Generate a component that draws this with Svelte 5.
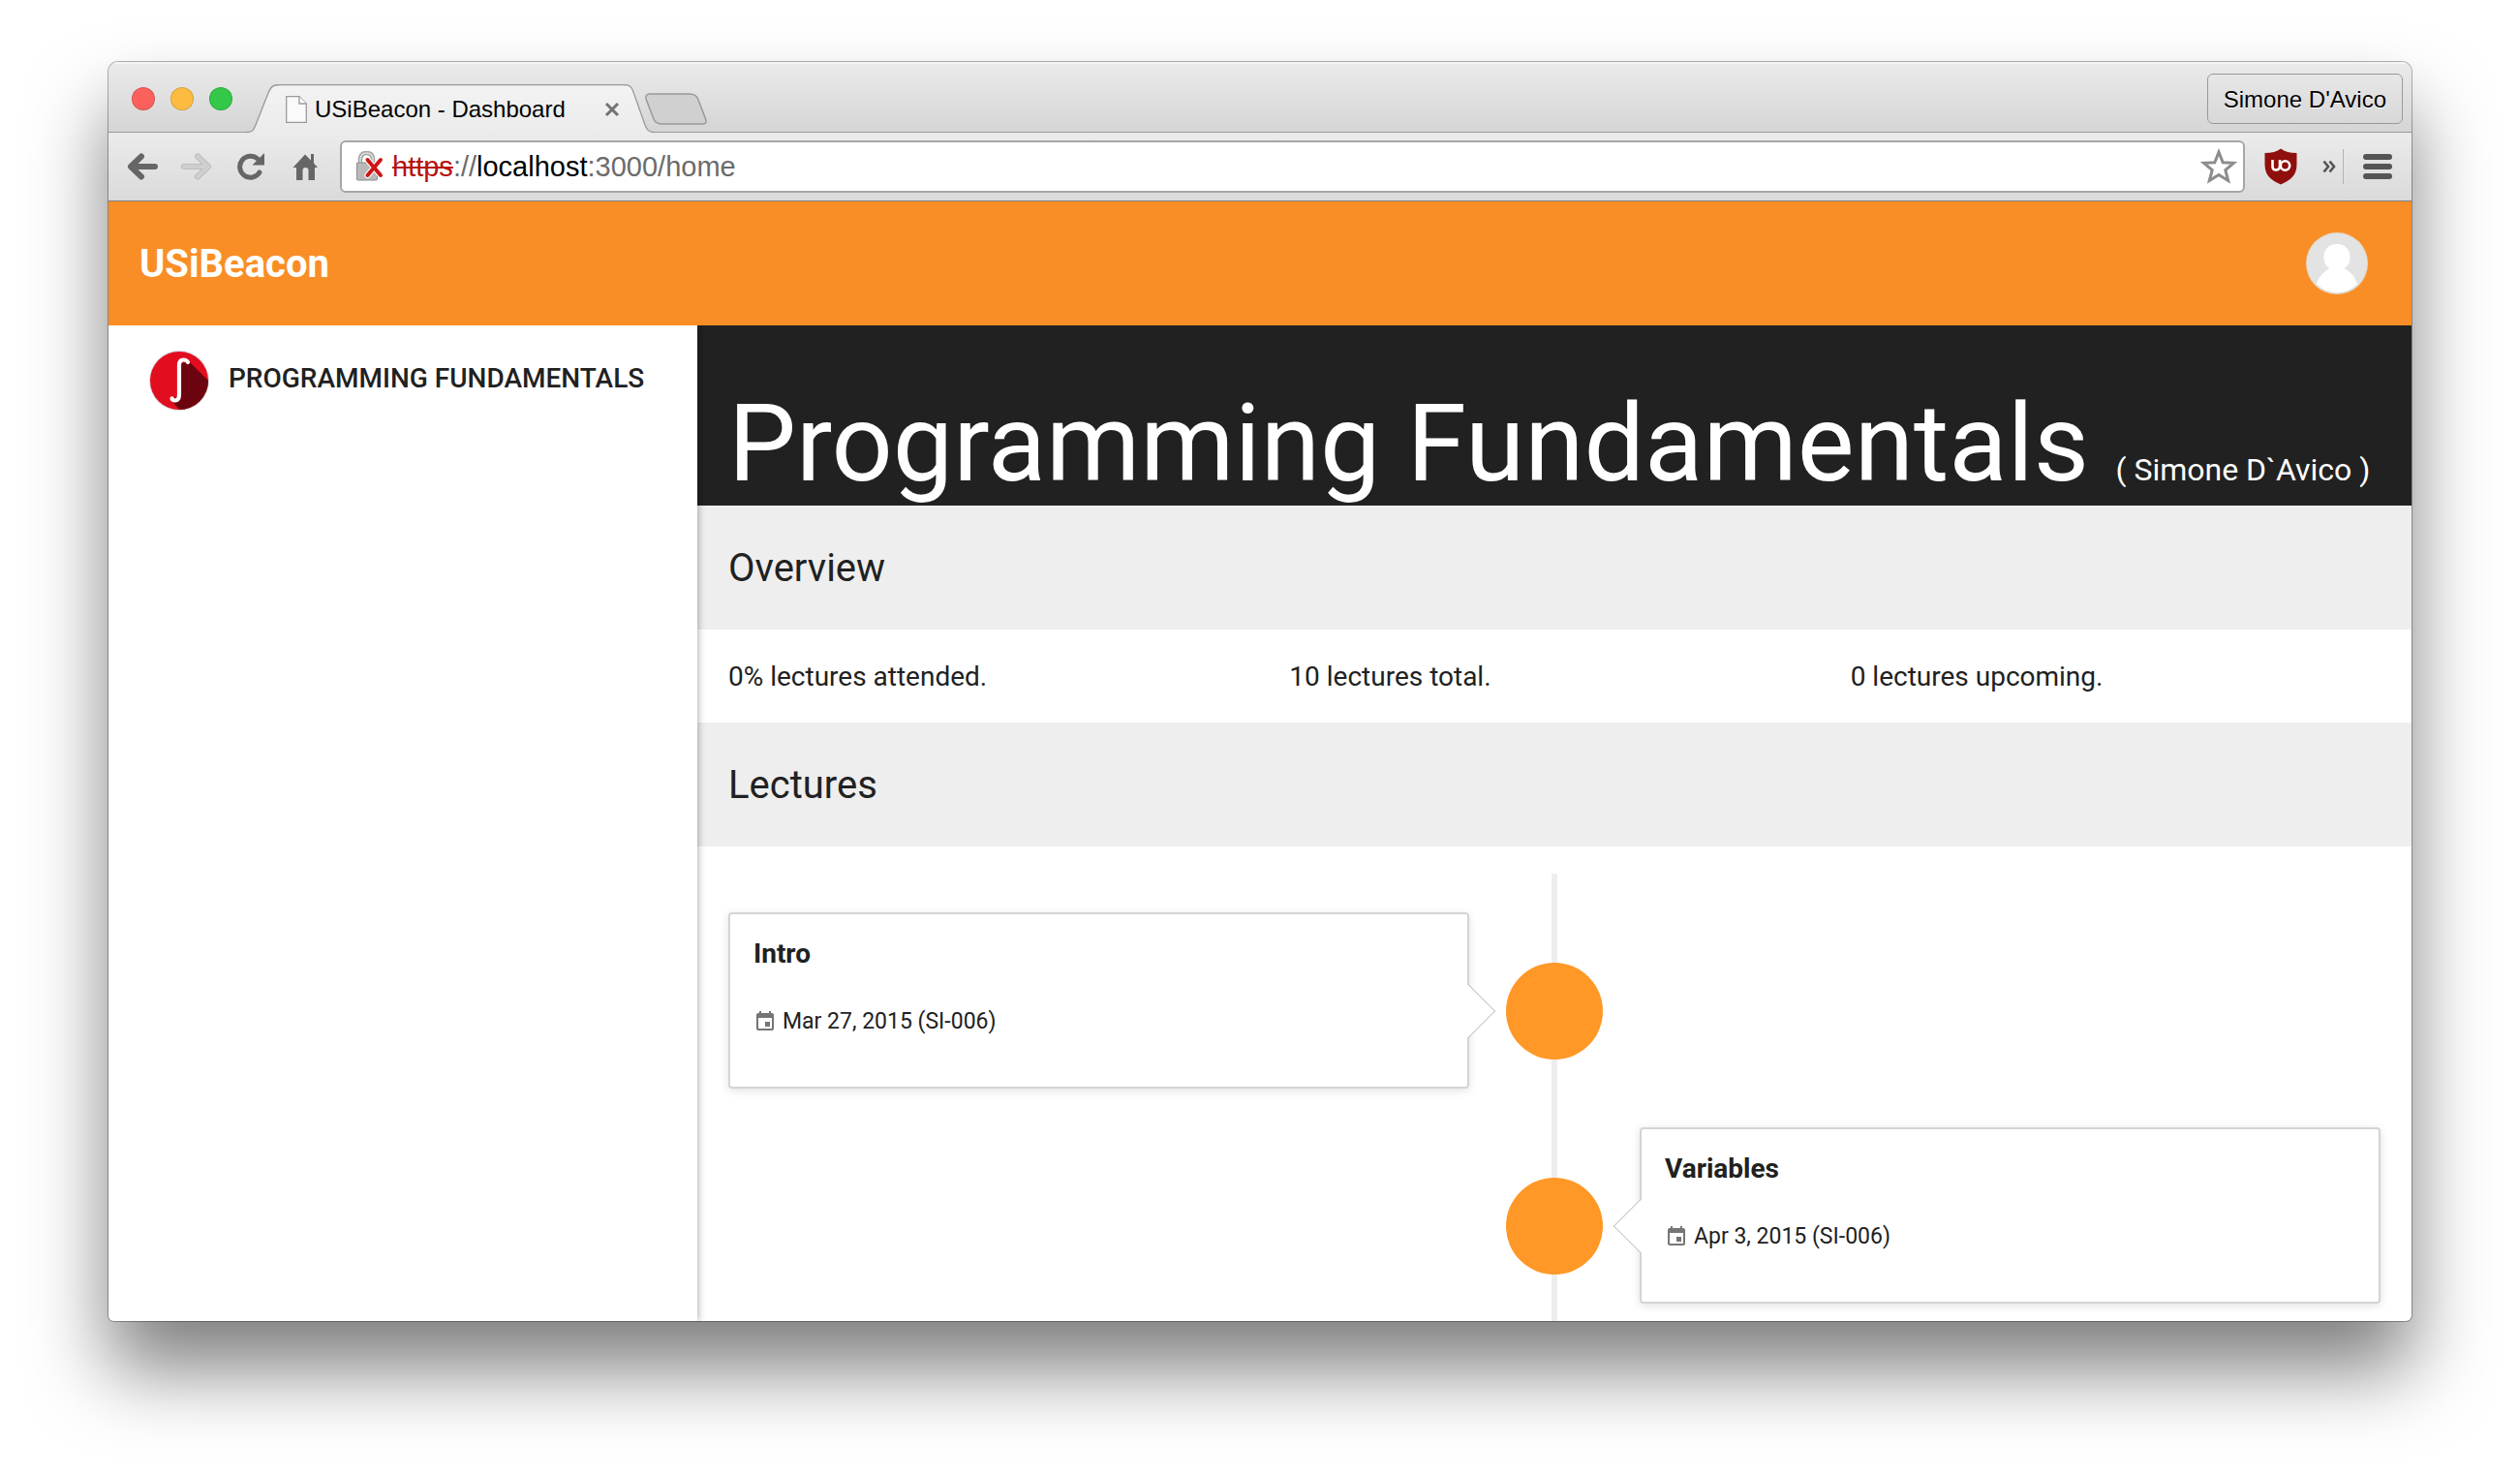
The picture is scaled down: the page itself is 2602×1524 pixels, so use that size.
<script>
  const stats = ['0% lectures attended.', '10 lectures total.', '0 lectures upcoming.'];
  const lectures = [
    { title: 'Intro', when: 'Mar 27, 2015 (SI-006)' },
    { title: 'Variables', when: 'Apr 3, 2015 (SI-006)' }
  ];
</script>

<div class="desktop">
  <div class="window">
    <div class="tabstrip">
      <div class="lights">
        <button class="light red" aria-label="Close window"></button>
        <button class="light yellow" aria-label="Minimise window"></button>
        <button class="light green" aria-label="Zoom window"></button>
      </div>
      <div class="tab">
        <svg class="tab-shape" viewBox="0 0 420 51" aria-hidden="true">
          <defs>
            <linearGradient id="tabfill" x1="0" y1="0" x2="0" y2="1">
              <stop offset="0" stop-color="#f3f3f3" />
              <stop offset="1" stop-color="#ebebeb" />
            </linearGradient>
          </defs>
          <path d="M0 51 V49.500 C6 49.500 7 47 9 42 L22 9 C25 2 27 .500 34 .500 H388 C395 .500 397 2 399 8 L411 42 C413 47 415 49.500 420 49.500 V51 Z" fill="url(#tabfill)" />
          <path d="M0 49.500 C6 49.500 7 47 9 42 L22 9 C25 2 27 .500 34 .500 H388 C395 .500 397 2 399 8 L411 42 C413 47 415 49.500 420 49.500" fill="none" stroke="#999" stroke-width="1.300" />
        </svg>
        <svg class="page-icon" viewBox="0 0 22 28" aria-hidden="true">
          <path d="M.700 .700 H14 L21.300 8 V27.300 H.700 Z" fill="#fafafa" stroke="#9a9a9a" stroke-width="1.300" />
          <path d="M14 .700 V8 H21.300" fill="#fff" stroke="#9a9a9a" stroke-width="1.300" />
        </svg>
        <span class="tab-title">USiBeacon - Dashboard</span>
        <button class="tab-close" aria-label="Close tab">
          <svg viewBox="0 0 16 16"><path d="M2 2 L14 14 M14 2 L2 14" stroke="#737373" stroke-width="3" /></svg>
        </button>
      </div>
      <button class="new-tab" aria-label="New tab">
        <svg viewBox="0 0 66 34"><path d="M6 1 H47 Q54 1 56 7 L64 28 Q65 32 60 32 H19 Q12 32 10 27 L2 6 Q1 1 6 1 Z" fill="#d0d0d0" stroke="#999" stroke-width="1.500" /></svg>
      </button>
      <button class="profile">Simone D'Avico</button>
    </div>

    <div class="toolbar">
      <div class="nav">
        <button aria-label="Back">
          <svg viewBox="0 0 32 28"><path d="M15 3.500 L4 14 L15 24.500 M5 14 H29" fill="none" stroke="#666" stroke-width="6" stroke-linecap="round" stroke-linejoin="round" /></svg>
        </button>
        <button aria-label="Forward">
          <svg viewBox="0 0 32 28"><path d="M17 3.500 L28 14 L17 24.500 M27 14 H3" fill="none" stroke="#bdbdbd" stroke-width="6" stroke-linecap="round" stroke-linejoin="round" /><path d="M17 3.500 L28 14 L17 24.500 M27 14 H3" fill="none" stroke="#cfcfcf" stroke-width="4" stroke-linecap="round" stroke-linejoin="round" /></svg>
        </button>
        <button aria-label="Reload">
          <svg viewBox="0 0 32 28"><path d="M25 20 A11 11 0 1 1 23 6" fill="none" stroke="#666" stroke-width="5" stroke-linecap="round" /><path d="M30 0 V12.500 H17.500 Z" fill="#666" /></svg>
        </button>
        <button aria-label="Home">
          <svg viewBox="0 0 32 28"><path d="M16 1.500 L22 7.500 V1 H25 V10.500 L29 15 H26 V28 H19.500 V18 Q19.500 15 16.500 15 Q13.500 15 13.500 18 V28 H7 V15 H3.500 Z" fill="#666" /></svg>
        </button>
      </div>
      <div class="omnibox">
        <svg class="lock" viewBox="0 0 30 32" aria-hidden="true">
          <path d="M5 14 V9 Q5 2 11.500 2 Q18 2 18 9 V14" fill="none" stroke="#a5a5a5" stroke-width="4.500" />
          <path d="M5 14 V9 Q5 2 11.500 2 Q18 2 18 9 V14" fill="none" stroke="#dedede" stroke-width="1.500" />
          <rect x="1.500" y="12" width="21" height="18" rx="1" fill="#b9b9b9" stroke="#8c8c8c" />
          <path d="M12.500 9 L26 25 M26 9 L12.500 25" stroke="#fff" stroke-width="6" stroke-linecap="round" />
          <path d="M12.500 9 L26 25 M26 9 L12.500 25" stroke="#cf1514" stroke-width="4" stroke-linecap="round" />
        </svg>
        <div class="url"><s>https</s>://<b>localhost</b>:3000/home</div>
        <button class="star" aria-label="Bookmark this page">
          <svg viewBox="0 0 38 38"><path d="M19 4 L23.200 14.700 L34.500 15.300 L25.800 22.500 L28.700 33.500 L19 27.400 L9.300 33.500 L12.200 22.500 L3.500 15.300 L14.800 14.700 Z" fill="#fff" stroke="#8c8c8c" stroke-width="3" /></svg>
        </button>
      </div>
      <button class="shield" aria-label="uBlock Origin">
        <svg viewBox="0 0 34 38">
          <path d="M17 .500 Q23 5 33.500 5 V17 C33.500 28 27 33 17 37.500 C7 33 .500 28 .500 17 V5 Q11 5 17 .500 Z" fill="#8f0f0c" />
          <path d="M8.500 12 V19 Q8.500 22.500 12 22.500 Q16 22.500 16 18 V12" fill="none" stroke="#fff" stroke-width="2.600" />
          <circle cx="21.500" cy="18" r="4.700" fill="none" stroke="#fff" stroke-width="2.600" />
        </svg>
      </button>
      <button class="more" aria-label="More extensions">
        <svg viewBox="0 0 14 14"><path d="M1.500 1.500 L6 7 L1.500 12.500 M7.500 1.500 L12 7 L7.500 12.500" fill="none" stroke="#555" stroke-width="2.600" /></svg>
      </button>
      <span class="divider"></span>
      <button class="menu" aria-label="Menu"><i></i><i></i><i></i></button>
    </div>

    <header class="appbar">
      <a class="brand" href="#home">USiBeacon</a>
      <button class="avatar" aria-label="Account">
        <svg viewBox="0 0 64 64">
          <circle cx="32" cy="32" r="32" fill="#e3d6c6" />
          <circle cx="32" cy="32" r="31" fill="#e3e3e3" />
          <path d="M32 12 C41 12 45.500 18 45.500 26 C45.500 31 43 35 39.500 37.500 C46 40 51 46 53 53.500 A30.500 30.500 0 0 1 11 53.500 C13 46 18 40 24.500 37.500 C21 35 18.500 31 18.500 26 C18.500 18 23 12 32 12 Z" fill="#fff" />
        </svg>
      </button>
    </header>

    <div class="body">
      <nav class="sidebar">
        <a class="course" href="#course">
          <svg viewBox="0 0 62 62" aria-hidden="true">
            <defs><clipPath id="disc"><circle cx="31" cy="31" r="30" /></clipPath></defs>
            <circle cx="31" cy="31" r="31" fill="#d8d8d8" />
            <g clip-path="url(#disc)">
              <rect width="62" height="62" fill="#e30d20" />
              <path d="M41 11 L66 36 V66 H36 L23 52 L31 45 V14 Z" fill="#6c040f" />
            </g>
            <path d="M40 12 Q38.500 9.500 35.500 9.500 Q31 9.500 31 15 V45 Q31 51.500 27 51.500 Q24.500 51.500 23.500 49.500" fill="none" stroke="#fff" stroke-width="4.200" stroke-linecap="round" />
          </svg>
          <span>PROGRAMMING FUNDAMENTALS</span>
        </a>
      </nav>
      <main>
        <div class="hero">
          <h1>Programming Fundamentals <small>( Simone D`Avico )</small></h1>
        </div>
        <h2>Overview</h2>
        <div class="stats">
          {#each stats as stat}<span>{stat}</span>{/each}
        </div>
        <h2>Lectures</h2>
        <div class="timeline">
          {#each lectures as lecture, i}
            <div class="row" class:flip={i % 2 === 1}>
              <article>
                <h3>{lecture.title}</h3>
                <p>
                  <svg viewBox="0 0 24 24" aria-hidden="true"><path d="M17 12h-5v5h5v-5zM16 1v2H8V1H6v2H5c-1.110 0-1.990.9-1.990 2L3 19c0 1.100.89 2 2 2h14c1.100 0 2-.9 2-2V5c0-1.100-.9-2-2-2h-1V1h-2zm3 18H5V8h14v11z" fill="#757575" /></svg>
                  <span>{lecture.when}</span>
                </p>
              </article>
              <span class="dot"></span>
            </div>
          {/each}
        </div>
      </main>
    </div>
  </div>
</div>

<style>
  :global(body) { background: #fff; }
  .desktop {
    box-sizing: border-box;
    height: 100vh;
    padding: 64px 112px 160px;
    overflow: hidden;
    font-family: Roboto, "Liberation Sans", sans-serif;
    color: #212121;
  }
  .window {
    display: flex;
    flex-direction: column;
    height: 100%;
    border-radius: 10px 10px 6px 6px;
    overflow: hidden;
    background: #fff;
    box-shadow: 0 0 0 1px rgba(0, 0, 0, .3), 0 50px 80px rgba(0, 0, 0, .5);
  }
  button {
    padding: 0;
    border: 0;
    background: none;
    font: inherit;
    color: inherit;
  }
  svg { display: block; }

  .tabstrip, .toolbar { font-family: "Liberation Sans", sans-serif; flex: none; }
  .tabstrip {
    display: flex;
    box-sizing: border-box;
    height: 73px;
    background: linear-gradient(#ebebeb, #d5d5d5);
    border-bottom: 1px solid #999;
    box-shadow: inset 0 2px 0 #f4f4f4;
  }
  .lights { display: flex; gap: 16px; padding: 26px 0 0 24px; }
  .light {
    width: 24px;
    height: 24px;
    border-radius: 50%;
    border: 1px solid rgba(0, 0, 0, .14);
  }
  .red { background: #fc605c; }
  .yellow { background: #fdbc40; }
  .green { background: #34c84a; }
  .tab {
    display: flex;
    position: relative;
    align-items: center;
    box-sizing: border-box;
    width: 420px;
    height: 51px;
    margin: 23px 0 0 15px;
    padding: 0 35px 0 40px;
  }
  .tab-shape { position: absolute; left: 0; top: 0; width: 420px; height: 51px; }
  .page-icon { position: relative; width: 22px; height: 28px; }
  .tab-title { position: relative; flex: 1; margin-left: 8px; font-size: 24px; line-height: 28px; color: #000; white-space: nowrap; }
  .tab-close { position: relative; width: 16px; height: 16px; }
  .new-tab { width: 66px; height: 34px; margin: 32px 0 0 -10px; }
  .profile {
    height: 52px;
    margin: 12px 9px 0 auto;
    padding: 2px 16px 0;
    border: 1px solid #999;
    border-radius: 6px;
    font-size: 24px;
    color: #000;
    text-shadow: 0 1px 0 #fff;
  }

  .toolbar {
    display: flex;
    align-items: center;
    box-sizing: border-box;
    height: 71px;
    padding: 0 20px 0 19px;
    background: linear-gradient(#ebebeb, #dadada);
    border-bottom: 1px solid #808080;
  }
  .nav { display: flex; gap: 24px; }
  .nav button { width: 32px; height: 28px; }
  .omnibox {
    display: flex;
    flex: 1;
    align-items: center;
    box-sizing: border-box;
    height: 54px;
    margin-left: 20px;
    padding: 0 6px 0 14px;
    border: 2px solid #a6a6a6;
    border-radius: 6px;
    background: #fff;
  }
  .lock { width: 30px; height: 32px; }
  .url { flex: 1; margin-left: 8px; font-size: 29px; line-height: 32px; color: #6b6b6b; }
  .url s { color: #b8120f; }
  .url b { font-weight: 400; color: #000; }
  .star { width: 38px; height: 38px; }
  .shield { width: 34px; height: 38px; margin-left: 20px; }
  .more { width: 14px; height: 14px; margin-left: 26px; }
  .divider { width: 1px; height: 36px; margin-left: 7px; background: #b4b4b4; }
  .menu { display: flex; flex-direction: column; gap: 4px; width: 30px; margin-left: 20px; }
  .menu i { height: 6px; border-radius: 3px; background: #555; }

  .appbar {
    display: flex;
    flex: none;
    align-items: center;
    justify-content: space-between;
    height: 128px;
    padding: 0 45px 0 32px;
    background: #fa8e26;
  }
  .brand { font-size: 40px; font-weight: 700; color: #fff; text-decoration: none; }
  .avatar, .avatar svg { width: 64px; height: 64px; }

  .body { display: flex; flex: 1; min-height: 0; }
  .sidebar {
    position: relative;
    flex: none;
    width: 608px;
    background: #fff;
    box-shadow: 0 0 8px rgba(0, 0, 0, .4);
    clip-path: inset(0 -12px 0 0);
  }
  .course {
    display: flex;
    align-items: center;
    gap: 20px;
    padding: 26px 42px;
    font-size: 28px;
    font-weight: 500;
    line-height: 56px;
    color: #212121;
    text-decoration: none;
    white-space: nowrap;
  }
  .course svg { flex: none; width: 62px; height: 62px; }
  .course span { padding-bottom: 4px; }
  main { flex: 1; min-width: 0; overflow: hidden; }
  .hero {
    display: flex;
    align-items: flex-end;
    box-sizing: border-box;
    height: 186px;
    padding: 0 32px;
    background: #212121;
    color: #fff;
  }
  h1 { margin: 0; font-size: 111px; font-weight: 400; line-height: 128px; white-space: nowrap; }
  h1 small { font-size: 32px; line-height: 32px; }
  h2 {
    margin: 0;
    padding: 2px 32px 0;
    background: #eee;
    font-size: 40px;
    font-weight: 400;
    line-height: 126px;
  }
  .stats {
    display: grid;
    grid-template-columns: repeat(3, 1fr);
    padding: 2px 0 0 32px;
    font-size: 28px;
    line-height: 94px;
  }
  .timeline {
    display: flex;
    flex-direction: column;
    gap: 40px;
    margin-top: 28px;
    padding: 40px 32px 200px;
    background: linear-gradient(#eee, #eee) center top / 6px 100% no-repeat;
  }
  .row {
    display: grid;
    grid-template-columns: 1fr 100px 1fr;
    column-gap: 38px;
  }
  article {
    position: relative;
    grid-row: 1;
    grid-column: 1;
    box-sizing: border-box;
    height: 182px;
    padding: 25px 24px;
    border: 2px solid #d4d4d4;
    border-radius: 4px;
    background: #fff;
    box-shadow: 0 2px 10px rgba(0, 0, 0, .12);
  }
  .flip article { grid-column: 3; }
  article::after {
    content: "";
    position: absolute;
    top: 80px;
    right: -21px;
    width: 40px;
    height: 40px;
    box-sizing: border-box;
    border: solid #c8c8c8;
    border-width: 1px 1px 0 0;
    background: linear-gradient(45deg, transparent 50%, #fff 50%);
    transform: rotate(45deg);
  }
  .flip article::after { right: auto; left: -21px; transform: rotate(225deg); }
  .dot {
    grid-row: 1;
    grid-column: 2;
    width: 100px;
    height: 100px;
    margin-top: 52px;
    border-radius: 50%;
    background: #ff9827;
  }
  h3 { margin: 0; font-size: 28px; font-weight: 700; line-height: 32px; }
  p { display: flex; align-items: center; gap: 6px; margin: 40px 0 0; font-size: 23px; line-height: 28px; }
  p svg { width: 24px; height: 24px; }
</style>
